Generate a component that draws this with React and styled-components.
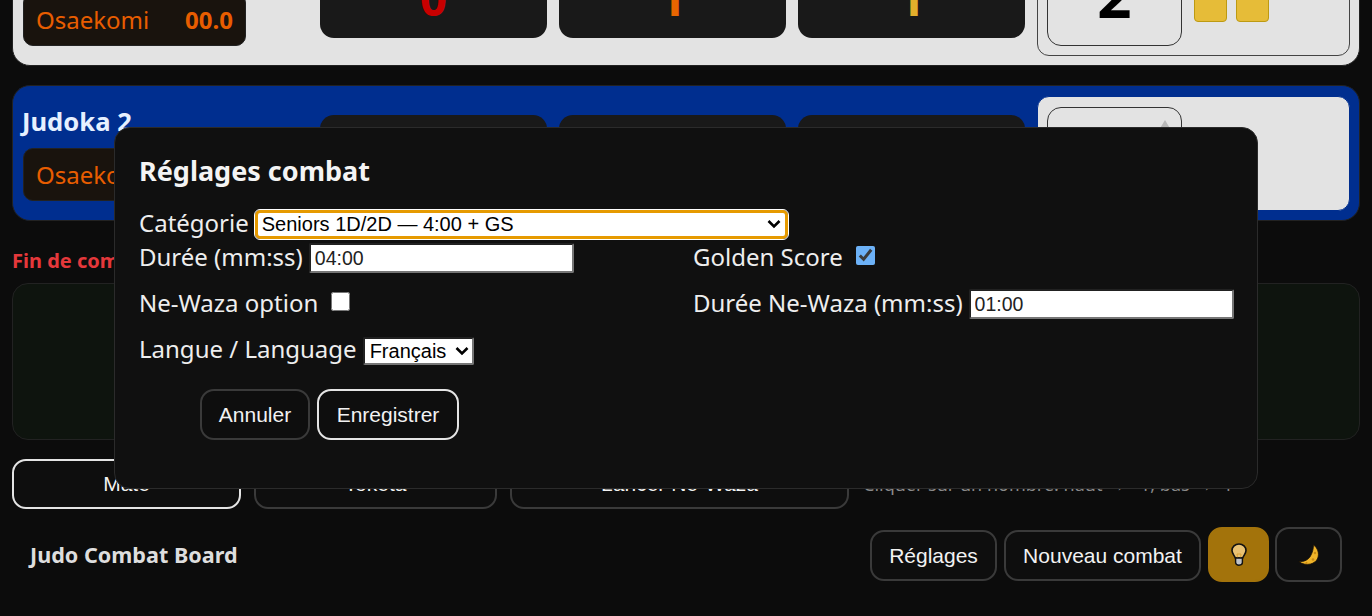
import React from 'react';
import styled, { createGlobalStyle } from 'styled-components';

const GlobalStyle = createGlobalStyle`
  html, body {
    margin: 0;
    padding: 0;
    background: #0c0c0c;
    overflow: hidden;
  }
`;

const chevron = encodeURIComponent(
  '<svg xmlns="http://www.w3.org/2000/svg" width="14" height="10" viewBox="0 0 14 10"><path d="M1.500 2 7 7.500 12.500 2" fill="none" stroke="#000" stroke-width="2.600"/></svg>'
);

const Page = styled.div`
  height: 616px;
  overflow: hidden;
  font-family: "Noto Sans", sans-serif;
  color: #e6e6e6;
`;

// the page is scrolled a bit in the shot, the first card starts above the fold
const Board = styled.div`
  display: flex;
  flex-direction: column;
  margin: -70px 12px 0;
`;

const FighterCard = styled.section`
  display: grid;
  grid-template-columns: 285px repeat(3, 1fr) 313px;
  gap: 12px;
  align-items: center;
  box-sizing: border-box;
  height: 136px;
  padding: 10px 9px 10px 10px;
  margin-bottom: 19px;
  border: 1px solid #222;
  border-radius: 18px;
  background: ${(p) => (p.$blue ? '#002e8f' : '#e3e3e3')};
`;

const FighterInfo = styled.div`
  display: flex;
  flex-direction: column;
  gap: 10px;
`;

const FighterName = styled.div`
  height: 32px;
  line-height: 32px;
  margin-left: -1px;
  font-size: 25.6px;
  font-weight: 700;
  color: ${(p) => (p.$blue ? '#e6f0ff' : '#111')};
`;

const OsaekomiBox = styled.div`
  display: flex;
  align-items: center;
  justify-content: space-between;
  box-sizing: border-box;
  width: 223px;
  height: 53px;
  padding: 0 12px;
  border: 1px solid #222;
  border-radius: 10px;
  background: #19130d;
  color: #e85d00;
  font-size: 24px;
`;

const OsaekomiTime = styled.b`
  font-weight: 700;
`;

const ScorePanel = styled.div`
  display: flex;
  align-items: center;
  justify-content: center;
  box-sizing: border-box;
  height: 78px;
  padding-bottom: 3px;
  border-radius: 14px;
  background: #191919;
  color: ${(p) => p.$color};
  font-size: 48px;
  font-weight: 700;
`;

const ShidoPanel = styled.div`
  display: flex;
  align-items: center;
  gap: 12px;
  box-sizing: border-box;
  height: 115px;
  padding: 0 9px;
  border: 1px solid ${(p) => (p.$blue ? '#002e8f' : '#444')};
  border-radius: 12px;
  background: #e3e3e3;
`;

const ShidoButton = styled.div`
  position: relative;
  display: flex;
  align-items: center;
  justify-content: center;
  box-sizing: border-box;
  width: 135px;
  height: 94px;
  padding-bottom: 7px;
  border: 1.5px solid #333;
  border-radius: 14px;
  color: #000;
  font-size: 60px;
  font-weight: 700;
`;

const UpArrow = styled.span`
  position: absolute;
  top: 12px;
  right: 10px;
  border-left: 6px solid transparent;
  border-right: 6px solid transparent;
  border-bottom: 10px solid #b8b8b8;
`;

const YellowCard = styled.span`
  box-sizing: border-box;
  width: 33px;
  height: 47px;
  border: 1px solid #bd9a12;
  border-radius: 4px;
  background: #e6bc38;
  & + & {
    margin-left: -3px;
  }
`;

const EndMessage = styled.div`
  height: 28px;
  line-height: 28px;
  margin: 7px 0 8px;
  color: #e5383b;
  font-size: 20px;
  font-weight: 700;
`;

const LogBox = styled.div`
  box-sizing: border-box;
  height: 157px;
  border: 1px solid #222;
  border-radius: 16px;
  background: #0e140e;
`;

const ActionRow = styled.div`
  display: flex;
  align-items: center;
  height: 50px;
  margin-top: 19px;
`;

const Button = styled.button`
  box-sizing: border-box;
  width: ${(p) => (p.$width ? `${p.$width}px` : 'auto')};
  padding: 0;
  border: 2px solid ${(p) => (p.$active ? '#e4e4e4' : '#3a3a3a')};
  border-radius: 14px;
  background: #0e0e0e;
  color: #f2f2f2;
  font-family: "Liberation Sans", Arial, sans-serif;
  font-size: 21px;
  cursor: pointer;
`;

const ActionButton = styled(Button)`
  flex: 0 0 ${(p) => p.$width}px;
  height: 50px;
  margin-right: 13px;
`;

const Hint = styled.span`
  margin-left: 1px;
  color: #8a8a8a;
  font-size: 18px;
  white-space: nowrap;
`;

const Footer = styled.footer`
  display: flex;
  align-items: center;
  justify-content: space-between;
  height: 55px;
  margin-top: 18px;
  padding: 0 18px;
`;

const BrandTitle = styled.div`
  color: #dedede;
  font-size: 21.6px;
  font-weight: 700;
`;

const FooterActions = styled.div`
  display: flex;
  align-items: center;
  gap: 7px;
`;

const FooterButton = styled(Button)`
  height: 51px;
  margin-top: 2px;
  white-space: nowrap;
`;

const IconButton = styled(Button)`
  display: flex;
  align-items: center;
  justify-content: center;
  height: 55px;
  border-color: ${(p) => (p.$lit ? '#a3730b' : '#3a3a3a')};
  background: ${(p) => (p.$lit ? '#a3730b' : '#0e0e0e')};
  &:last-child {
    margin-left: -1px;
  }
`;

const Overlay = styled.div`
  position: fixed;
  inset: 0;
  display: flex;
  align-items: center;
  justify-content: center;
`;

const Modal = styled.div`
  box-sizing: border-box;
  width: 1144px;
  height: 362px;
  padding: 25px 24px 0;
  border: 1px solid #2b2b2b;
  border-radius: 16px;
  background: #101010;
  color: #eee;
`;

const ModalTitle = styled.h2`
  height: 36px;
  line-height: 36px;
  margin: 0 0 19px;
  color: #f4f4f4;
  font-size: 27px;
  font-weight: 700;
`;

const Label = styled.label`
  display: flex;
  align-items: center;
  gap: 6px;
  height: ${(p) => p.$height || 30}px;
  font-size: 24px;
  white-space: nowrap;
`;

const LabelText = styled.span`
  margin-bottom: 4px;
`;

const FormGrid = styled.div`
  display: grid;
  grid-template-columns: 554px 1fr;
  row-gap: 16px;
  margin-top: 3px;
`;

const CategorySelect = styled.select`
  appearance: none;
  box-sizing: border-box;
  width: 533px;
  height: 29px;
  padding: 0 4px;
  border: 3px solid #e69a00;
  border-radius: 5px;
  outline: 1px solid #fff;
  background: #fff url("data:image/svg+xml,${chevron}") no-repeat right 4px center;
  color: #000;
  font-family: "Liberation Sans", Arial, sans-serif;
  font-size: 20px;
`;

const TextInput = styled.input`
  box-sizing: border-box;
  flex: ${(p) => (p.$wide ? 1 : 'none')};
  width: 265px;
  height: 30px;
  padding: 0 4px;
  border-radius: 2px;
  background: #fff;
  color: #222;
  font-family: "Liberation Sans", Arial, sans-serif;
  font-size: 19.5px;
`;

const Check = styled.input`
  width: 19px;
  height: 19px;
  margin: 0 0 5px 7px;
  accent-color: #6cb1f7;
`;

const LanguageSelect = styled.select`
  appearance: none;
  box-sizing: border-box;
  width: 111px;
  height: 28px;
  margin-top: 2px;
  padding: 0 5px;
  border: 2px inset #767676;
  border-radius: 2px;
  background: #fff url("data:image/svg+xml,${chevron}") no-repeat right 3px center;
  color: #000;
  font-family: "Liberation Sans", Arial, sans-serif;
  font-size: 20px;
`;

const ModalActions = styled.div`
  display: flex;
  gap: 7px;
  margin: 24px 0 0 61px;
`;

const ModalButton = styled(Button)`
  height: 51px;
`;

const BulbIcon = () => (
  <svg width="16" height="23" viewBox="0 0 16 23">
    <path d="M8 1C4 1 1 4 1 7.6c0 3 2.4 4.7 3.3 7.4h7.4c.9-2.7 3.3-4.4 3.3-7.4C15 4 12 1 8 1z" fill="#e9c273" stroke="#111" strokeWidth="1.6" />
    <path d="M6.500 15 6 11h4l-.5 4" fill="none" stroke="#d8a032" strokeWidth="0.9" />
    <path d="M4.600 15h6.800v4.600c0 1.600-1.500 2.600-3.400 2.600s-3.400-1-3.400-2.600z" fill="#bfc3c8" stroke="#111" strokeWidth="1.4" />
  </svg>
);

const MoonIcon = () => (
  <svg width="21" height="22" viewBox="0 0 21 22">
    <path d="M15.500.8C19.500 4 21.500 9 19.800 14 17.800 20 8 23 .8 17.500 6.500 18 10.500 15.500 12.500 12 14.500 8.500 15.500 4.500 15.500.8z" fill="#f0b429" stroke="#1a1206" strokeWidth="0.8" />
    <circle cx="17" cy="9" r="1.200" fill="#c98a12" />
    <circle cx="15" cy="15.500" r="1.300" fill="#c98a12" />
    <circle cx="8.500" cy="19" r="1.100" fill="#c98a12" />
  </svg>
);

const Fighter = ({ name, blue, shido, cards }) => (
  <FighterCard $blue={blue}>
    <FighterInfo>
      <FighterName $blue={blue}>{name}</FighterName>
      <OsaekomiBox>
        <span>Osaekomi</span>
        <OsaekomiTime>00.0</OsaekomiTime>
      </OsaekomiBox>
    </FighterInfo>
    <ScorePanel $color="#c80000">0</ScorePanel>
    <ScorePanel $color="#e86500">{blue ? 0 : 1}</ScorePanel>
    <ScorePanel $color="#e3ae2b">{blue ? 0 : 1}</ScorePanel>
    <ShidoPanel $blue={blue}>
      <ShidoButton>
        <UpArrow />
        {shido}
      </ShidoButton>
      {Array.from({ length: cards }).map((_, i) => (
        <YellowCard key={i} />
      ))}
    </ShidoPanel>
  </FighterCard>
);

const App = () => {
  return (
    <Page>
      <GlobalStyle />
      <Board>
        <Fighter name="Judoka 1" shido={2} cards={2} />
        <Fighter name="Judoka 2" blue shido={0} cards={0} />
        <EndMessage>Fin de combat</EndMessage>
        <LogBox />
        <ActionRow>
          <ActionButton $width={229} $active>Mate</ActionButton>
          <ActionButton $width={243}>Toketa</ActionButton>
          <ActionButton $width={339}>Lancer Ne-Waza</ActionButton>
          <Hint>Cliquer sur un nombre: haut → +1, bas → -1</Hint>
        </ActionRow>
        <Footer>
          <BrandTitle>Judo Combat Board</BrandTitle>
          <FooterActions>
            <FooterButton $width={127}>Réglages</FooterButton>
            <FooterButton $width={197}>Nouveau combat</FooterButton>
            <IconButton $width={61} $lit><BulbIcon /></IconButton>
            <IconButton $width={67}><MoonIcon /></IconButton>
          </FooterActions>
        </Footer>
      </Board>
      <Overlay>
        <Modal>
          <ModalTitle>Réglages combat</ModalTitle>
          <Label $height={32}>
            <LabelText>Catégorie</LabelText>
            <CategorySelect defaultValue="s">
              <option value="s">Seniors 1D/2D — 4:00 + GS</option>
            </CategorySelect>
          </Label>
          <FormGrid>
            <Label>
              <LabelText>Durée (mm:ss)</LabelText>
              <TextInput defaultValue="04:00" />
            </Label>
            <Label>
              <LabelText>Golden Score</LabelText>
              <Check type="checkbox" defaultChecked />
            </Label>
            <Label>
              <LabelText>Ne-Waza option</LabelText>
              <Check type="checkbox" />
            </Label>
            <Label>
              <LabelText>Durée Ne-Waza (mm:ss)</LabelText>
              <TextInput $wide defaultValue="01:00" />
            </Label>
            <Label>
              <LabelText>Langue / Language</LabelText>
              <LanguageSelect defaultValue="fr">
                <option value="fr">Français</option>
              </LanguageSelect>
            </Label>
          </FormGrid>
          <ModalActions>
            <ModalButton $width={110}>Annuler</ModalButton>
            <ModalButton $width={142} $active>Enregistrer</ModalButton>
          </ModalActions>
        </Modal>
      </Overlay>
    </Page>
  );
};

export default App;
